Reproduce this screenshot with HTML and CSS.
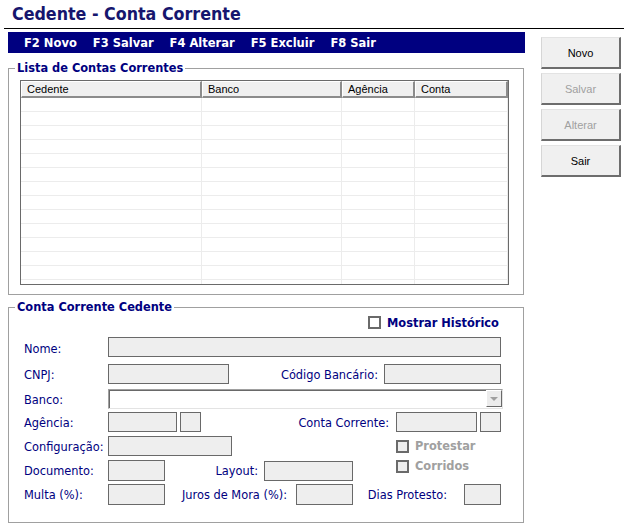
FILE: index.html
```html
<!DOCTYPE html>
<html lang="pt">
<head>
<meta charset="utf-8">
<title>Cedente - Conta Corrente</title>
<link rel="stylesheet" href="styles.css">
</head>
<body>
<div class="title">Cedente - Conta Corrente</div>
<div class="rule"></div>
<div class="main">
  <div class="left">
    <div class="menubar">
      <span>F2 Novo</span><span>F3 Salvar</span><span>F4 Alterar</span><span>F5 Excluir</span><span>F8 Sair</span>
    </div>
    <fieldset class="group group-list">
      <legend>Lista de Contas Correntes</legend>
      <div class="list-body">
        <div class="grid">
          <div class="grid-head"><div>Cedente</div><div>Banco</div><div>Agência</div><div>Conta</div></div>
          <div class="grid-row"><div></div><div></div><div></div><div></div></div>
          <div class="grid-row"><div></div><div></div><div></div><div></div></div>
          <div class="grid-row"><div></div><div></div><div></div><div></div></div>
          <div class="grid-row"><div></div><div></div><div></div><div></div></div>
          <div class="grid-row"><div></div><div></div><div></div><div></div></div>
          <div class="grid-row"><div></div><div></div><div></div><div></div></div>
          <div class="grid-row"><div></div><div></div><div></div><div></div></div>
          <div class="grid-row"><div></div><div></div><div></div><div></div></div>
          <div class="grid-row"><div></div><div></div><div></div><div></div></div>
          <div class="grid-row"><div></div><div></div><div></div><div></div></div>
          <div class="grid-row"><div></div><div></div><div></div><div></div></div>
          <div class="grid-row"><div></div><div></div><div></div><div></div></div>
          <div class="grid-row"><div></div><div></div><div></div><div></div></div>
          <div class="grid-row"><div></div><div></div><div></div><div></div></div>
        </div>
      </div>
    </fieldset>
    <fieldset class="group group-form">
      <legend>Conta Corrente Cedente</legend>
      <div class="form-body">
        <div class="row row-hist"><span class="cb"></span><span class="cb-label">Mostrar Histórico</span></div>
        <div class="row r-nome"><span class="lbl">Nome:</span><span class="inp w-nome"></span></div>
        <div class="row r-cnpj"><span class="lbl">CNPJ:</span><span class="inp w-cnpj"></span><span class="rl w-rl-cod">Código Bancário:</span><span class="inp w-cod"></span></div>
        <div class="row r-banco"><span class="lbl">Banco:</span><span class="combo"><span class="combo-btn"><span class="arrow"></span></span></span></div>
        <div class="row r-ag"><span class="lbl">Agência:</span><span class="inp w-ag"></span><span class="inp w-small gap3"></span><span class="rl w-rl-conta">Conta Corrente:</span><span class="inp w-conta"></span><span class="inp w-small gap3"></span></div>
        <div class="row r-conf"><span class="lbl">Configuração:</span><span class="inp w-conf"></span><span class="cb cb-dis cb-conf"></span><span class="cb-label dis">Protestar</span></div>
        <div class="row r-doc"><span class="lbl">Documento:</span><span class="inp w-57"></span><span class="rl w-rl-layout">Layout:</span><span class="inp w-layout"></span><span class="cb cb-dis cb-doc"></span><span class="cb-label dis top">Corridos</span></div>
        <div class="row r-multa"><span class="lbl">Multa (%):</span><span class="inp w-57"></span><span class="rl w-rl-juros">Juros de Mora (%):</span><span class="inp w-57"></span><span class="rl w-rl-dias">Dias Protesto:</span><span class="inp w-dias"></span></div>
      </div>
    </fieldset>
  </div>
  <div class="buttons">
    <div class="btn">Novo</div>
    <div class="btn disabled">Salvar</div>
    <div class="btn disabled">Alterar</div>
    <div class="btn">Sair</div>
  </div>
</div>
</body>
</html>
```
FILE: styles.css
```css
html, body {
  margin: 0;
  padding: 0;
}
body {
  width: 634px;
  height: 531px;
  overflow: hidden;
  background: #fff;
  font-family: "DejaVu Sans", sans-serif;
  font-size: 11.4px;
  color: #000080;
}
.title {
  height: 25px;
  padding: 3px 0 0 12px;
  font-family: "DejaVu Sans", sans-serif;
  font-stretch: condensed;
  font-weight: bold;
  font-size: 17.7px;
  line-height: 22px;
  color: #16166e;
  white-space: nowrap;
}
.rule {
  margin-left: 4px;
  width: 620px;
  height: 1px;
  background: #000;
}
.main {
  display: flex;
  margin-top: 3px;
}
.left {
  margin-left: 8px;
  width: 517px;
  flex: none;
}
.menubar {
  height: 21px;
  background: #000080;
  color: #fff;
  font-weight: bold;
  font-size: 11.5px;
  display: flex;
  align-items: center;
  gap: 16px;
  padding-left: 16px;
  white-space: nowrap;
}
.group {
  margin: 0;
  padding: 0;
  border: 1px solid #a0a0a0;
  width: 516px;
  box-sizing: border-box;
  min-width: 0;
}
.group legend {
  margin-left: 6px;
  padding: 0 2px;
  font-weight: bold;
  font-size: 11.4px;
  line-height: 14px;
  color: #000080;
}
.group-list { margin-top: 8px; }
.group-form { margin-top: 5px; }
.list-body {
  padding: 5px 0 9px 11px;
}
.grid {
  width: 489px;
  height: 205px;
  box-sizing: border-box;
  border: 1px solid #6a6a6a;
  overflow: hidden;
  background: #fff;
  font-family: "Liberation Sans", Arial, sans-serif;
  color: #000;
  font-size: 11px;
}
.grid-head, .grid-row {
  display: grid;
  grid-template-columns: 181px 140px 73px 93px;
}
.grid-head div {
  height: 17px;
  box-sizing: border-box;
  background: #f0f0f0;
  border-top: 1px solid #fff;
  border-left: 1px solid #fff;
  border-right: 2px solid #8c8c8c;
  border-bottom: 2px solid #8c8c8c;
  padding-left: 5px;
  line-height: 14px;
}
.grid-row div {
  height: 14px;
  box-sizing: border-box;
  border-right: 1px solid #ececec;
  border-bottom: 1px solid #ececec;
}
.buttons {
  margin-left: 16px;
  padding-top: 5px;
  width: 80px;
  display: flex;
  flex-direction: column;
  gap: 4px;
}
.btn {
  height: 32px;
  box-sizing: border-box;
  background: #f0f0f0;
  border-top: 1px solid #e3e3e3;
  border-left: 1px solid #d6d6d6;
  border-right: 2px solid #6d6d6d;
  border-bottom: 2px solid #6d6d6d;
  font-family: "Liberation Sans", Arial, sans-serif;
  font-size: 11px;
  color: #000;
  display: flex;
  align-items: center;
  justify-content: center;
}
.btn.disabled { color: #a0a0a0; }

.form-body {
  padding: 2px 0 17px 15px;
}
.row {
  display: flex;
  align-items: center;
  height: 20px;
  white-space: nowrap;
}
.row-hist {
  height: 13px;
  padding-left: 344px;
}
.r-nome { margin-top: 8px; }
.r-cnpj { margin-top: 7px; }
.r-banco { margin-top: 5px; }
.r-ag { margin-top: 3px; }
.r-conf { margin-top: 4px; }
.r-doc { margin-top: 4px; height: 21px; align-items: flex-start; }
.r-doc .lbl, .r-doc .rl { align-self: center; }
.r-multa { margin-top: 3px; height: 21px; }
.lbl {
  width: 84px;
  flex: none;
  padding-top: 1px;
}
.r-nome .lbl { padding-top: 3px; }
.rl {
  flex: none;
  text-align: right;
  box-sizing: border-box;
  padding-top: 1px;
}
.w-rl-cod { width: 155px; padding-right: 6px; }
.w-rl-conta { width: 195px; padding-right: 7px; }
.w-rl-layout { width: 99px; padding-right: 6px; }
.w-rl-juros { width: 131px; padding-right: 9px; }
.w-rl-dias { width: 111px; padding-right: 17px; }
.inp {
  flex: none;
  height: 20px;
  box-sizing: border-box;
  border: 1px solid #696969;
  background: #eeeeee;
}
.r-doc .inp, .r-multa .inp { height: 21px; }
.r-doc .w-layout { height: 20px; margin-top: 1px; }
.gap3 { margin-left: 3px; }
.w-nome { width: 393px; }
.w-cnpj { width: 121px; }
.w-cod { width: 117px; }
.w-ag { width: 69px; }
.w-small { width: 21px; }
.w-conta { width: 81px; }
.w-conf { width: 124px; }
.w-57 { width: 57px; }
.w-layout { width: 89px; }
.w-dias { width: 37px; }
.combo {
  flex: none;
  width: 395px;
  height: 20px;
  box-sizing: border-box;
  border-top: 1px solid #a0a0a0;
  border-left: 1px solid #a0a0a0;
  border-right: 1px solid #e3e3e3;
  border-bottom: 1px solid #e3e3e3;
  box-shadow: inset 1px 1px 0 #696969;
  background: #fff;
  display: flex;
  justify-content: flex-end;
  align-items: flex-start;
}
.combo-btn {
  width: 16px;
  height: 17px;
  box-sizing: border-box;
  background: #ececec;
  border-top: 1px solid #fff;
  border-left: 1px solid #fff;
  border-right: 1px solid #696969;
  border-bottom: 1px solid #696969;
  display: flex;
  align-items: center;
  justify-content: center;
}
.arrow {
  width: 0;
  height: 0;
  border-left: 4px solid transparent;
  border-right: 4px solid transparent;
  border-top: 4px solid #a0a0a0;
}
.cb {
  flex: none;
  width: 13px;
  height: 13px;
  box-sizing: border-box;
  border: 2px solid #6a6a6a;
  background: #fff;
}
.cb-dis { background: #eeeeee; }
.cb-conf { margin-left: 164px; }
.cb-doc { margin-left: 43px; }
.cb-label {
  margin-left: 6px;
  font-weight: bold;
  font-size: 11.4px;
  color: #000080;
}
.cb-label.dis { color: #a0a0a0; }
.cb-label.top { line-height: 13px; }
```
